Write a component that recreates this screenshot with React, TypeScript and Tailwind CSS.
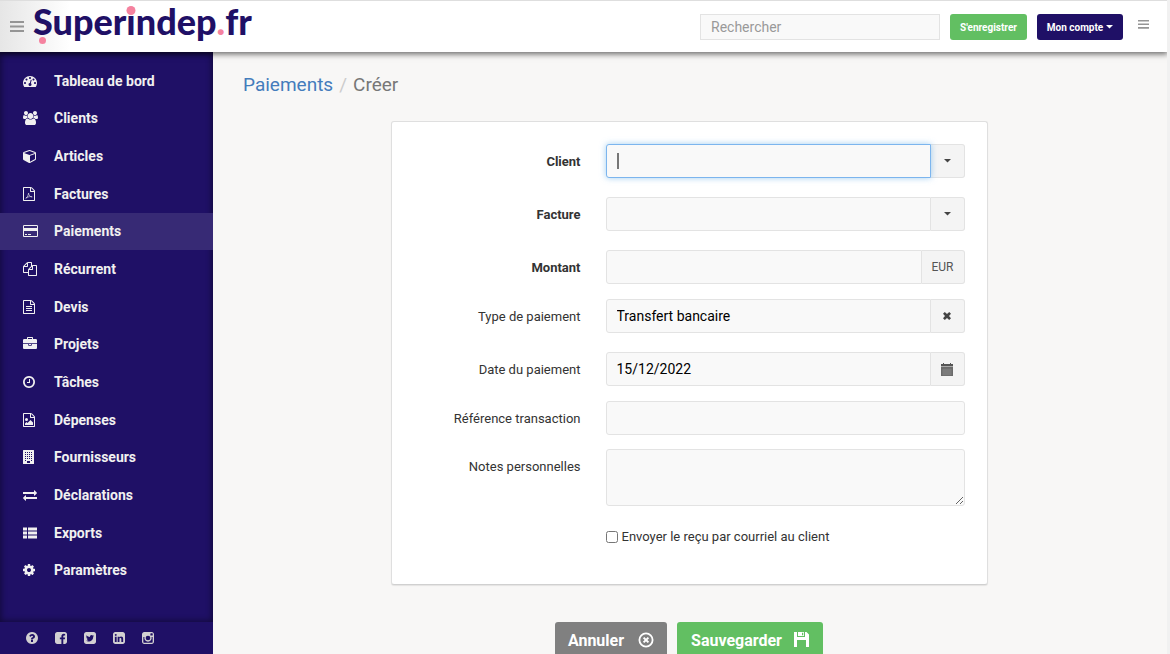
import { useState, type ReactNode } from "react";

// Tracés au format 1792 (même grille que la police d'icônes du menu)
const CERCLE = "M1664 896q0 209-103 385.5t-279.5 279.5-385.5 103-385.5-103-279.5-279.5-103-385.5 103-385.5 279.5-279.5 385.5-103 385.5 103 279.5 279.5 103 385.5z";
const CARRE = "M1664 416v960q0 119-84.5 203.5t-203.5 84.5h-960q-119 0-203.5-84.5t-84.5-203.5v-960q0-119 84.5-203.5t203.5-84.5h960q119 0 203.5 84.5t84.5 203.5z";
const FICHIER = "M1468 380q28 28 48 76t20 88v1152q0 40-28 68t-68 28h-1344q-40 0-68-28t-28-68v-1600q0-40 28-68t68-28h896q40 0 88 20t76 48zm-444-244v376h376q-10-29-22-41l-313-313q-12-12-41-22zm384 1528v-1024h-416q-40 0-68-28t-28-68v-416h-768v1536h1280z";

function Icone({ children, w = 1792 }: { children: ReactNode; w?: number }) {
  return (
    <svg viewBox={`0 0 ${w} 1792`} className="h-3.5 w-auto" fill="currentColor" fillRule="evenodd" aria-hidden="true">
      {children}
    </svg>
  );
}

const MENU: { nom: string; icone: ReactNode }[] = [
  {
    nom: "Tableau de bord",
    icone: <Icone><path d="M384 1152q0-53-37.5-90.5t-90.5-37.5-90.5 37.5-37.5 90.5 37.5 90.5 90.5 37.5 90.5-37.5 37.5-90.5zm192-448q0-53-37.5-90.5t-90.5-37.5-90.5 37.5-37.5 90.5 37.5 90.5 90.5 37.5 90.5-37.5 37.5-90.5zm428 481l101-382q6-26-7.5-48.5t-38.5-29.5-48 6.5-30 39.5l-101 382q-60 5-107 43.5t-63 98.5q-20 77 20 146t117 89 146-20 89-117q16-60-6-117t-72-91zm660-33q0-53-37.5-90.5t-90.5-37.5-90.5 37.5-37.5 90.5 37.5 90.5 90.5 37.5 90.5-37.5 37.5-90.5zm-640-640q0-53-37.5-90.5t-90.5-37.5-90.5 37.5-37.5 90.5 37.5 90.5 90.5 37.5 90.5-37.5 37.5-90.5zm448 192q0-53-37.5-90.5t-90.5-37.5-90.5 37.5-37.5 90.5 37.5 90.5 90.5 37.5 90.5-37.5 37.5-90.5zm320 448q0 261-141 483-19 29-54 29h-1402q-35 0-54-29-141-221-141-483 0-182 71-348t191-286 286-191 348-71 348 71 286 191 191 286 71 348z" /></Icone>,
  },
  {
    nom: "Clients",
    icone: <Icone w={1920}><path d="M593 896q-162 5-265 128h-134q-82 0-138-40.5t-56-118.5q0-353 124-353 6 0 43.5 21t97.5 42.5 119 21.5q67 0 133-23-5 37-5 66 0 139 81 256zm1071 637q0 120-73 189.5t-194 69.5h-874q-121 0-194-69.5t-73-189.5q0-53 3.5-103.5t14-109 26.5-108.5 43-97.5 62-81 85.5-53.5 111.5-20q10 0 43 21.5t73 48 107 48 135 21.5 135-21.5 107-48 73-48 43-21.5q61 0 111.5 20t85.5 53.5 62 81 43 97.5 26.5 108.5 14 109 3.5 103.5zm-1024-1277q0 106-75 181t-181 75-181-75-75-181 75-181 181-75 181 75 75 181zm704 384q0 159-112.5 271.5t-271.5 112.5-271.5-112.5-112.5-271.5 112.5-271.5 271.5-112.5 271.5 112.5 112.5 271.5zm576 225q0 78-56 118.5t-138 40.5h-134q-103-123-265-128 81-117 81-256 0-29-5-66 66 23 133 23 59 0 119-21.5t97.5-42.5 43.5-21q124 0 124 353zm-128-609q0 106-75 181t-181 75-181-75-75-181 75-181 181-75 181 75 75 181z" /></Icone>,
  },
  {
    nom: "Articles",
    icone: <Icone><path d="M896 1629l640-349v-636l-640 233v752zm-64-865l698-254-698-254-698 254zm832-252v768q0 35-18 65t-49 47l-704 384q-28 16-61 16t-61-16l-704-384q-31-17-49-47t-18-65v-768q0-40 23-73t61-47l704-256q22-8 44-8t44 8l704 256q38 14 61 47t23 73z" /></Icone>,
  },
  {
    nom: "Factures",
    icone: (
      <Icone w={1536}>
        <path d={FICHIER} />
        <path fill="none" stroke="currentColor" strokeWidth="80" d="M340 1480c120-20 330-330 370-700 30 280 200 500 460 500 60-90-500-80-800 120" />
      </Icone>
    ),
  },
  {
    nom: "Paiements",
    icone: <Icone w={1920}><path d="M160 128h1600q66 0 113 47t47 113v1216q0 66-47 113t-113 47h-1600q-66 0-113-47t-47-113v-1216q0-66 47-113t113-47zm0 128q-13 0-22 9t-10 23v224h1664v-224q0-14-9-23t-23-9zm1600 1280q13 0 22-9t10-23v-608h-1664v608q0 14 9 23t23 9zM256 1408v-128h256v128zm384 0v-128h384v128z" /></Icone>,
  },
  {
    nom: "Récurrent",
    icone: <Icone><path d="M1696 384q40 0 68 28t28 68v1216q0 40-28 68t-68 28h-960q-40 0-68-28t-28-68v-288h-544q-40 0-68-28t-28-68v-672q0-40 20-88t48-76l408-408q28-28 76-48t88-20h416q40 0 68 28t28 68v328q68-40 128-40h416zm-544 213l-299 299h299v-299zm-640-384l-299 299h299v-299zm196 647l316-316v-416h-384v416q0 40-28 68t-68 28h-416v640h512v-256q0-40 20-88t48-76zm956 804v-1152h-384v416q0 40-28 68t-68 28h-416v640h896z" /></Icone>,
  },
  {
    nom: "Devis",
    icone: <Icone w={1536}><path d={FICHIER} /><path d="M384 768h768v128h-768zm0 256h768v128h-768zm0 256h768v128h-768z" /></Icone>,
  },
  {
    nom: "Projets",
    icone: <Icone><path d="M640 256h512v-128h-512v128zm1152 640v480q0 66-47 113t-113 47h-1472q-66 0-113-47t-47-113v-480h672v160q0 26 19 45t45 19h320q26 0 45-19t19-45v-160h672zm-768 0v128h-256v-128h256zm768-480v384h-1792v-384q0-66 47-113t113-47h352v-160q0-40 28-68t68-28h576q40 0 68 28t28 68v160h352q66 0 113 47t47 113z" /></Icone>,
  },
  {
    nom: "Tâches",
    icone: (
      <Icone w={1536}>
        <path transform="translate(-128)" d="M1024 544v448q0 14-9 23t-23 9h-320q-14 0-23-9t-9-23v-64q0-14 9-23t23-9h224v-352q0-14 9-23t23-9h64q14 0 23 9t9 23zm416 352q0-148-73-273t-198-198-273-73-273 73-198 198-73 273 73 273 198 198 273 73 273-73 198-198 73-273zm224 0q0 209-103 385.5t-279.5 279.5-385.5 103-385.5-103-279.5-279.5-103-385.5 103-385.5 279.5-279.5 385.5-103 385.5 103 279.5 279.5 103 385.5z" />
      </Icone>
    ),
  },
  {
    nom: "Dépenses",
    icone: (
      <Icone w={1536}>
        <path d={FICHIER} />
        <path d="M1280 1216v320h-1024v-192l192-192 128 128 384-384zM448 1024a192 192 0 1 1 0-384 192 192 0 0 1 0 384z" />
      </Icone>
    ),
  },
  {
    nom: "Fournisseurs",
    icone: (
      <Icone w={1408}>
        <path d="M64 0h1280q64 0 64 64v1664q0 64-64 64h-1280q-64 0-64-64v-1664q0-64 64-64zM512 1408v256h384v-256zM256 256v128h128v-128zm256 0v128h128v-128zm256 0v128h128v-128zm256 0v128h128v-128zM256 512v128h128v-128zm256 0v128h128v-128zm256 0v128h128v-128zm256 0v128h128v-128zM256 768v128h128v-128zm256 0v128h128v-128zm256 0v128h128v-128zm256 0v128h128v-128zM256 1024v128h128v-128zm256 0v128h128v-128zm256 0v128h128v-128zm256 0v128h128v-128zM256 1280v128h128v-128zm768 0v128h128v-128z" />
      </Icone>
    ),
  },
  {
    nom: "Déclarations",
    icone: <Icone><path d="M1792 1184v192q0 13-9.5 22.5t-22.5 9.5h-1376v192q0 13-9.5 22.5t-22.5 9.5q-12 0-24-10l-319-320q-9-9-9-22 0-14 9-23l320-320q9-9 23-9 13 0 22.5 9.5t9.5 22.5v192h1376q13 0 22.5 9.5t9.5 22.5zm0-544q0 14-9 23l-320 320q-9 9-23 9-13 0-22.5-9.5t-9.5-22.5v-192h-1376q-13 0-22.5-9.5t-9.5-22.5v-192q0-13 9.5-22.5t22.5-9.5h1376v-192q0-14 9-23t23-9q12 0 24 10l319 319q9 9 9 23z" /></Icone>,
  },
  {
    nom: "Exports",
    icone: <Icone><path d="M0 192h512v384h-512zM640 192h1152v384h-1152zM0 704h512v384h-512zM640 704h1152v384h-1152zM0 1216h512v384h-512zM640 1216h1152v384h-1152z" /></Icone>,
  },
  {
    nom: "Paramètres",
    icone: (
      <Icone w={1536}>
        <path transform="translate(-128)" d="M1152 896q0-106-75-181t-181-75-181 75-75 181 75 181 181 75 181-75 75-181zm512-109v222q0 12-8 23t-20 13l-185 28q-19 54-39 91 35 50 107 138 10 12 10 25t-9 23q-27 37-99 108t-94 71q-12 0-26-9l-138-108q-44 23-91 38-16 136-29 186-7 28-36 28h-222q-14 0-24.5-8.5t-11.5-21.5l-28-184q-49-16-90-37l-141 107q-10 9-25 9-14 0-25-11-126-114-165-168-7-10-7-23 0-12 8-23 15-21 51-66.5t54-70.5q-27-50-41-99l-183-27q-13-2-21-12.5t-8-23.5v-222q0-12 8-23t19-13l186-28q14-46 39-92-40-57-107-138-10-12-10-24 0-10 9-23 26-36 98.5-107.5t94.5-71.5q13 0 26 10l138 107q44-23 91-38 16-136 29-186 7-28 36-28h222q14 0 24.5 8.5t11.5 21.5l28 184q49 16 90 37l142-107q9-9 24-9 13 0 25 10 129 119 165 170 7 8 7 22 0 12-8 23-15 21-51 66.5t-54 70.5q26 50 41 98l183 28q13 2 21 12.5t8 23.5z" />
      </Icone>
    ),
  },
];

const RESEAUX: { nom: string; trace: string }[] = [
  { nom: "Aide", trace: CERCLE + "M1024 1376v-192q0-14-9-23t-23-9h-192q-14 0-23 9t-9 23v192q0 14 9 23t23 9h192q14 0 23-9t9-23zm256-672q0-88-55.5-163t-138.5-116-170-41q-243 0-371 213-15 24 8 42l132 100q7 6 19 6 16 0 25-12 53-68 86-92 34-24 86-24 48 0 85.5 26t37.5 59q0 38-20 61t-68 45q-63 28-115.5 86.5t-52.5 125.5v36q0 14 9 23t23 9h192q14 0 23-9t9-23q0-19 21.5-49.5t54.5-49.5q32-18 49-28.5t46-35 44.5-48 28-60.5 12.5-81z" },
  { nom: "Facebook", trace: "M1376 128q119 0 203.5 84.5t84.5 203.5v960q0 119-84.5 203.5t-203.5 84.5h-188v-595h199l30-232h-229v-148q0-56 23.5-84t91.5-28l122-1v-207q-63-9-178-9-136 0-217.5 80t-81.5 226v171h-200v232h200v595h-532q-119 0-203.5-84.5t-84.5-203.5v-960q0-119 84.5-203.5t203.5-84.5h960z" },
  { nom: "Twitter", trace: CARRE + "M1408 610q-56 25-121 34 68-40 93-117-65 38-134 51-61-66-153-66-87 0-148.5 61.5t-61.5 148.5q0 29 5 48-129-7-242-65t-192-155q-29 50-29 106 0 114 91 175-47-1-100-26v2q0 75 50 133.5t123 72.5q-29 8-51 8-13 0-39-4 21 63 74.5 104t121.5 42q-116 90-261 90-26 0-50-3 148 94 322 94 112 0 210-35.5t168-95 120.5-137 75-162 24.5-168.5q0-18-1-27 63-45 105-109z" },
  { nom: "LinkedIn", trace: CARRE + "M365 1414h231v-694h-231v694zm246-908q-1-52-36-86t-93-34-94.5 34-36.5 86q0 51 35.5 85.5t92.5 34.5h1q59 0 95-34.5t36-85.5zm585 908h231v-398q0-154-73-233t-193-79q-136 0-209 117h2v-101h-231q3 66 0 694h231v-388q0-38 7-56 15-35 45-59.5t74-24.5q116 0 116 157v371z" },
  { nom: "Instagram", trace: CARRE + "M300 780h140a470 470 0 1 0 912 0h140v640q0 72-72 72h-1048q-72 0-72-72zM896 596a300 300 0 1 1 0 600 300 300 0 0 1 0-600zM1260 300h180q60 0 60 60v170q0 60-60 60h-180q-60 0-60-60v-170q0-60 60-60z" },
];

function Caret() {
  return <svg viewBox="0 0 8 4" className="w-[7px]" fill="currentColor" aria-hidden="true"><path d="M0 0h8l-4 4z" /></svg>;
}

function Barres() {
  return (
    <svg viewBox="0 0 14 11" className="w-full" fill="currentColor" aria-hidden="true">
      <path d="M0 0h14v2H0zM0 4.5h14v2H0zM0 9h14v2H0z" />
    </svg>
  );
}

const CHAMP = "h-[34px] w-full min-w-0 flex-1 rounded-l-[3px] border border-[#e3e3e3] bg-[#f9f9f9] px-2.5 text-sm text-black outline-none";
const BOUTON = "flex h-[34px] w-[34px] shrink-0 items-center justify-center rounded-r-[3px] border border-l-0 border-[#e3e3e3] bg-[#f4f4f4] text-[#444]";

function Ligne({ id, label, gras, children }: { id: string; label: string; gras?: boolean; children: ReactNode }) {
  return (
    <div className="flex gap-[25px]">
      <label htmlFor={id} className={`flex-1 pt-[9px] text-right text-[13px] leading-[18px] text-[#333] ${gras ? "font-bold" : ""}`}>{label}</label>
      <div className="relative flex w-[359px]">{children}</div>
    </div>
  );
}

export default function App() {
  const [client, setClient] = useState("");
  const [facture, setFacture] = useState("");
  const [montant, setMontant] = useState("");
  const [type, setType] = useState("Transfert bancaire");
  const [date, setDate] = useState("15/12/2022");
  const [envoyer, setEnvoyer] = useState(false);

  return (
    <div className="flex h-screen flex-col overflow-hidden border-r-3 border-[#f1f1f1] bg-[#f8f7f6] font-['Roboto',sans-serif]">
      <header className="relative z-10 flex h-[52px] shrink-0 items-center border-t border-[#dedede] bg-linear-to-r from-[#e6e6e6] via-white via-6% to-white pr-[18px] pl-2.5 shadow-[0_1px_6px_1px_rgba(0,0,0,0.6)]">
        <button type="button" aria-label="Menu" className="w-3.5 text-[#959595]"><Barres /></button>
        <a href="#" className="relative mb-3 ml-[9px] text-[36px] leading-[46px] font-black text-[#1f1066] font-['Lato',sans-serif]">
          Super
          <span className="relative">
            i<span className="absolute top-[7px] left-1/2 size-[9px] -translate-x-1/2 rounded-full bg-[#f5829f]" />
          </span>
          ndep<span className="text-[#f5829f]">.</span>fr
          <span className="absolute bottom-0 left-1.5 size-[7px] rounded-full bg-[#f5829f]" />
        </a>
        <input type="search" aria-label="Rechercher" placeholder="Rechercher" className="ml-auto h-[26px] w-60 border border-[#e3e3e3] bg-[#f9f9f9] px-2.5 text-sm text-[#333] outline-none placeholder:text-[#999]" />
        <button type="button" className="ml-2.5 h-[26px] w-[77px] rounded-[3px] bg-[#62bf62] pt-px text-[10px] font-bold text-white">S'enregistrer</button>
        <button type="button" className="ml-2.5 flex h-[26px] w-[86px] items-center justify-center gap-[3px] rounded-[3px] bg-[#1f1066] pt-px text-[10px] font-bold text-white">
          Mon compte <Caret />
        </button>
        <button type="button" aria-label="Historique" className="ml-[15px] w-[11px] pb-1 text-[#959595]"><Barres /></button>
      </header>

      <div className="flex min-h-0 flex-1">
        <aside className="flex w-[213px] shrink-0 flex-col bg-[#1f1066]">
          <nav className="grid flex-1 auto-rows-fr pt-2.5 pb-[33px] shadow-[inset_0_0_6px_1px_rgba(0,0,0,0.45)]">
            {MENU.map((m) => (
              <a key={m.nom} href="#" className={`flex items-center pl-[23px] text-sm font-bold text-[#f1f0f0] ${m.nom === "Paiements" ? "bg-[#372a75]" : ""}`}>
                <span className="w-[31px]">{m.icone}</span>
                {m.nom}
              </a>
            ))}
          </nav>
          <div className="flex h-8 items-center gap-[15px] pl-[25px] text-[#d2d0d2]">
            {RESEAUX.map((r) => (
              <a key={r.nom} href="#" aria-label={r.nom}><Icone><path d={r.trace} /></Icone></a>
            ))}
          </div>
        </aside>

        <main className="min-w-0 flex-1 overflow-y-auto pt-[21px] pr-8 pb-10 pl-[30px] [scrollbar-width:none]">
          <nav aria-label="Fil d'Ariane" className="flex text-[19px] leading-6 text-[#777]">
            <a href="#" className="text-[#447cbc]">Paiements</a>
            <span className="px-1.5 text-[#ccc]">/</span>
            <span>Créer</span>
          </nav>

          <form onSubmit={(e) => e.preventDefault()}>
            <div className="mx-auto mt-6 flex max-w-[597px] flex-col rounded-[3px] border border-[#dfdfdf] border-b-[#d0d0d0] bg-white px-[22px] pt-[22px] pb-[38px] shadow-[0_1px_1px_rgba(0,0,0,0.08)]">
              <div className="flex flex-col gap-[19px]">
                <Ligne id="client" label="Client" gras>
                  <input id="client" value={client} onChange={(e) => setClient(e.target.value)} className="relative z-10 h-[34px] w-full min-w-0 flex-1 rounded-l-[3px] border border-[#7cb5ee] bg-[#f9f9f9] px-2.5 text-sm text-black shadow-[0_0_6px_rgba(102,175,233,0.6)] outline-none" />
                  {client === "" && <span className="pointer-events-none absolute top-[9px] left-[11px] z-20 h-4 w-0.5 bg-[#777]" />}
                  <button type="button" aria-label="Choisir un client" className={BOUTON}><Caret /></button>
                </Ligne>
                <Ligne id="facture" label="Facture" gras>
                  <input id="facture" value={facture} onChange={(e) => setFacture(e.target.value)} className={CHAMP} />
                  <button type="button" aria-label="Choisir une facture" className={BOUTON}><Caret /></button>
                </Ligne>
                <Ligne id="montant" label="Montant" gras>
                  <input id="montant" value={montant} onChange={(e) => setMontant(e.target.value)} className={CHAMP} />
                  <span className="flex h-[34px] w-[43px] shrink-0 items-center justify-center rounded-r-[3px] border border-l-0 border-[#e3e3e3] bg-[#f4f4f4] text-xs text-[#555]">EUR</span>
                </Ligne>
              </div>

              <div className="mt-[15px] flex flex-col gap-[19px]">
                <Ligne id="type" label="Type de paiement">
                  <input id="type" value={type} onChange={(e) => setType(e.target.value)} className={CHAMP} />
                  <button type="button" aria-label="Effacer" onClick={() => setType("")} className={BOUTON}>
                    <svg viewBox="0 0 8 8" className="size-2" fill="currentColor" aria-hidden="true"><path d="M1.8 0L4 2 6.2 0 8 1.8 6 4l2 2.2L6.2 8 4 6 1.8 8 0 6.2 2 4 0 1.8z" /></svg>
                  </button>
                </Ligne>
                <Ligne id="date" label="Date du paiement">
                  <input id="date" value={date} onChange={(e) => setDate(e.target.value)} className={CHAMP} />
                  <button type="button" aria-label="Ouvrir le calendrier" className={BOUTON}>
                    <svg viewBox="0 0 12 13" className="h-[13px] w-3" aria-hidden="true">
                      <path fill="#555" d="M0 1h2V0h1v1h6V0h1v1h2v2H0z" />
                      <path fill="#aaa" d="M0 3h12v1H0z" />
                      <path fill="#6b6b6b" d="M0 4h12v9H0z" />
                      <path fill="none" stroke="#999" strokeWidth=".4" d="M1 7h10M1 9h10M1 11h10M3 5.500v7M5 5.500v7M7 5.500v7M9 5.500v7" />
                    </svg>
                  </button>
                </Ligne>
              </div>

              <div className="mt-[15px] flex flex-col gap-3.5">
                <Ligne id="reference" label="Référence transaction">
                  <input id="reference" className="h-[34px] w-full rounded-[3px] border border-[#e3e3e3] bg-[#f9f9f9] px-2.5 text-sm text-black outline-none" />
                </Ligne>
                <Ligne id="notes" label="Notes personnelles">
                  <textarea id="notes" className="h-[57px] w-full resize-y rounded-[3px] border border-[#e3e3e3] bg-[#f9f9f9] px-2.5 py-1.5 text-sm text-black outline-none" />
                </Ligne>
              </div>

              <label className="mt-[22px] ml-auto flex w-[359px] items-center gap-1 text-[13px] leading-[18px] text-[#333]">
                <input type="checkbox" checked={envoyer} onChange={(e) => setEnvoyer(e.target.checked)} className="size-3" />
                Envoyer le reçu par courriel au client
              </label>
            </div>

            <div className="mt-[37px] flex justify-center gap-2.5">
              <button type="button" className="flex h-[38px] w-28 items-center justify-center gap-3.5 rounded-[3px] bg-[#808080] text-base font-bold text-white">
                Annuler
                <svg viewBox="0 0 16 16" className="mb-0.5 size-4" fill="none" stroke="currentColor" strokeWidth="2" aria-hidden="true">
                  <circle cx="8" cy="8" r="6.6" strokeWidth="1.8" />
                  <path d="M5.600 5.600l4.800 4.800M10.400 5.600l-4.800 4.800" />
                </svg>
              </button>
              <button type="submit" className="flex h-[38px] w-[146px] items-center justify-center gap-3 rounded-[3px] bg-[#62bf62] text-base font-bold text-white">
                Sauvegarder
                <svg viewBox="0 0 15 15" className="mb-1 size-[15px]" fill="currentColor" fillRule="evenodd" aria-hidden="true">
                  <path d="M0 0h3v5h8V0h1.500L15 2.500V15h-3V8H3v7H0zM4 0h6v4H4zM8 .800v2.400h1.200V.800z" />
                </svg>
              </button>
            </div>
          </form>
        </main>
      </div>
    </div>
  );
}
